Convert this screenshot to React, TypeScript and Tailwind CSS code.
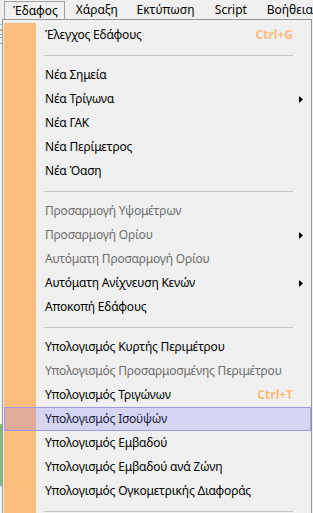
type Item =
  | { kind: "sep" }
  | { kind: "item"; label: string; disabled?: boolean; shortcut?: string; sub?: boolean; active?: boolean };

const items: Item[] = [
  { kind: "item", label: "Έλεγχος Εδάφους", shortcut: "Ctrl+G" },
  { kind: "sep" },
  { kind: "item", label: "Νέα Σημεία" },
  { kind: "item", label: "Νέα Τρίγωνα", sub: true },
  { kind: "item", label: "Νέα ΓΑΚ" },
  { kind: "item", label: "Νέα Περίμετρος" },
  { kind: "item", label: "Νέα Όαση" },
  { kind: "sep" },
  { kind: "item", label: "Προσαρμογή Υψομέτρων", disabled: true },
  { kind: "item", label: "Προσαρμογή Ορίου", disabled: true, sub: true },
  { kind: "item", label: "Αυτόματη Προσαρμογή Ορίου", disabled: true },
  { kind: "item", label: "Αυτόματη Ανίχνευση Κενών", sub: true },
  { kind: "item", label: "Αποκοπή Εδάφους" },
  { kind: "sep" },
  { kind: "item", label: "Υπολογισμός Κυρτής Περιμέτρου" },
  { kind: "item", label: "Υπολογισμός Προσαρμοσμένης Περιμέτρου", disabled: true },
  { kind: "item", label: "Υπολογισμός Τριγώνων", shortcut: "Ctrl+T" },
  { kind: "item", label: "Υπολογισμός Ισοϋψών", active: true },
  { kind: "item", label: "Υπολογισμός Εμβαδού" },
  { kind: "item", label: "Υπολογισμός Εμβαδού ανά Ζώνη" },
  { kind: "item", label: "Υπολογισμός Ογκομετρικής Διαφοράς" },
  { kind: "sep" },
];

function Arrow() {
  return (
    <svg width="4" height="7" viewBox="0 0 4 7" className="block">
      <polygon points="0,0 4,3.5 0,7" fill="#000" />
    </svg>
  );
}

function MenuRow({ item }: { item: Item }) {
  if (item.kind === "sep") {
    return (
      <div className="flex h-[16px]">
        <div className="w-[32px] bg-[#fbbc7c]" />
        <div className="flex flex-1 items-center ml-[8px] mr-[18px]">
          <div className="h-px w-full bg-[#c4c4c4]" />
        </div>
      </div>
    );
  }
  return (
    <div className="relative flex h-[24px]">
      <div className="w-[32px] bg-[#fbbc7c]" />
      <div
        className={`flex flex-1 items-center pl-[9px] whitespace-nowrap tracking-[-0.2px] ${
          item.disabled ? "text-[#6d6d6d]" : "text-black"
        }`}
      >
        {item.label}
      </div>
      {item.shortcut && (
        <div className="flex items-center font-bold text-[#fbbc7c]">{item.shortcut}</div>
      )}
      <div className="flex w-[18px] items-center pl-[6px]">{item.sub && <Arrow />}</div>
      {item.active && (
        <div className="absolute inset-0 border border-[#9a9aee] bg-[rgba(120,120,255,0.22)]" />
      )}
    </div>
  );
}

export default function App() {
  return (
    <div className="w-[313px] h-[513px] overflow-hidden bg-[#f0f0f0] font-['Noto_Sans',sans-serif] text-[12px] leading-none">
      {/* menu bar */}
      <div className="flex h-[19px] pl-[4px] pt-[1px] text-black">
        <div className="flex w-[62px] items-center border-x border-t border-[#a0a0a0] pl-[8px]">Έδαφος</div>
        <div className="flex w-[62px] items-center pl-[11px]">Χάραξη</div>
        <div className="flex w-[80px] items-center pl-[11px]">Εκτύπωση</div>
        <div className="flex w-[53px] items-center pl-[11px]">Script</div>
        <div className="flex items-center pl-[11px] whitespace-nowrap">Βοήθεια</div>
      </div>

      <div className="flex">
        {/* app behind the menu */}
        <div className="flex w-[2px] flex-col bg-[#f4f4f4]">
          <div className="mt-[5px] h-px bg-[#b0b0b0]" />
          <div className="mt-[4px] h-[2px] bg-[#f0a060]" />
          <div className="mt-[3px] h-px bg-[#a0a0a0]" />
          <div className="mt-[2px] h-px bg-[#a0a0a0]" />
          <div className="mt-[5px] h-px bg-[#a0a0a0]" />
          <div className="mt-[380px] h-[62px] bg-[#7dbf7d]" />
        </div>

        {/* dropdown */}
        <div className="w-[310px] h-[494px] border border-b-0 border-[#979797] pl-[1px] pt-[3px]">
          {items.map((it, i) => (
            <MenuRow key={i} item={it} />
          ))}
        </div>
      </div>
    </div>
  );
}
